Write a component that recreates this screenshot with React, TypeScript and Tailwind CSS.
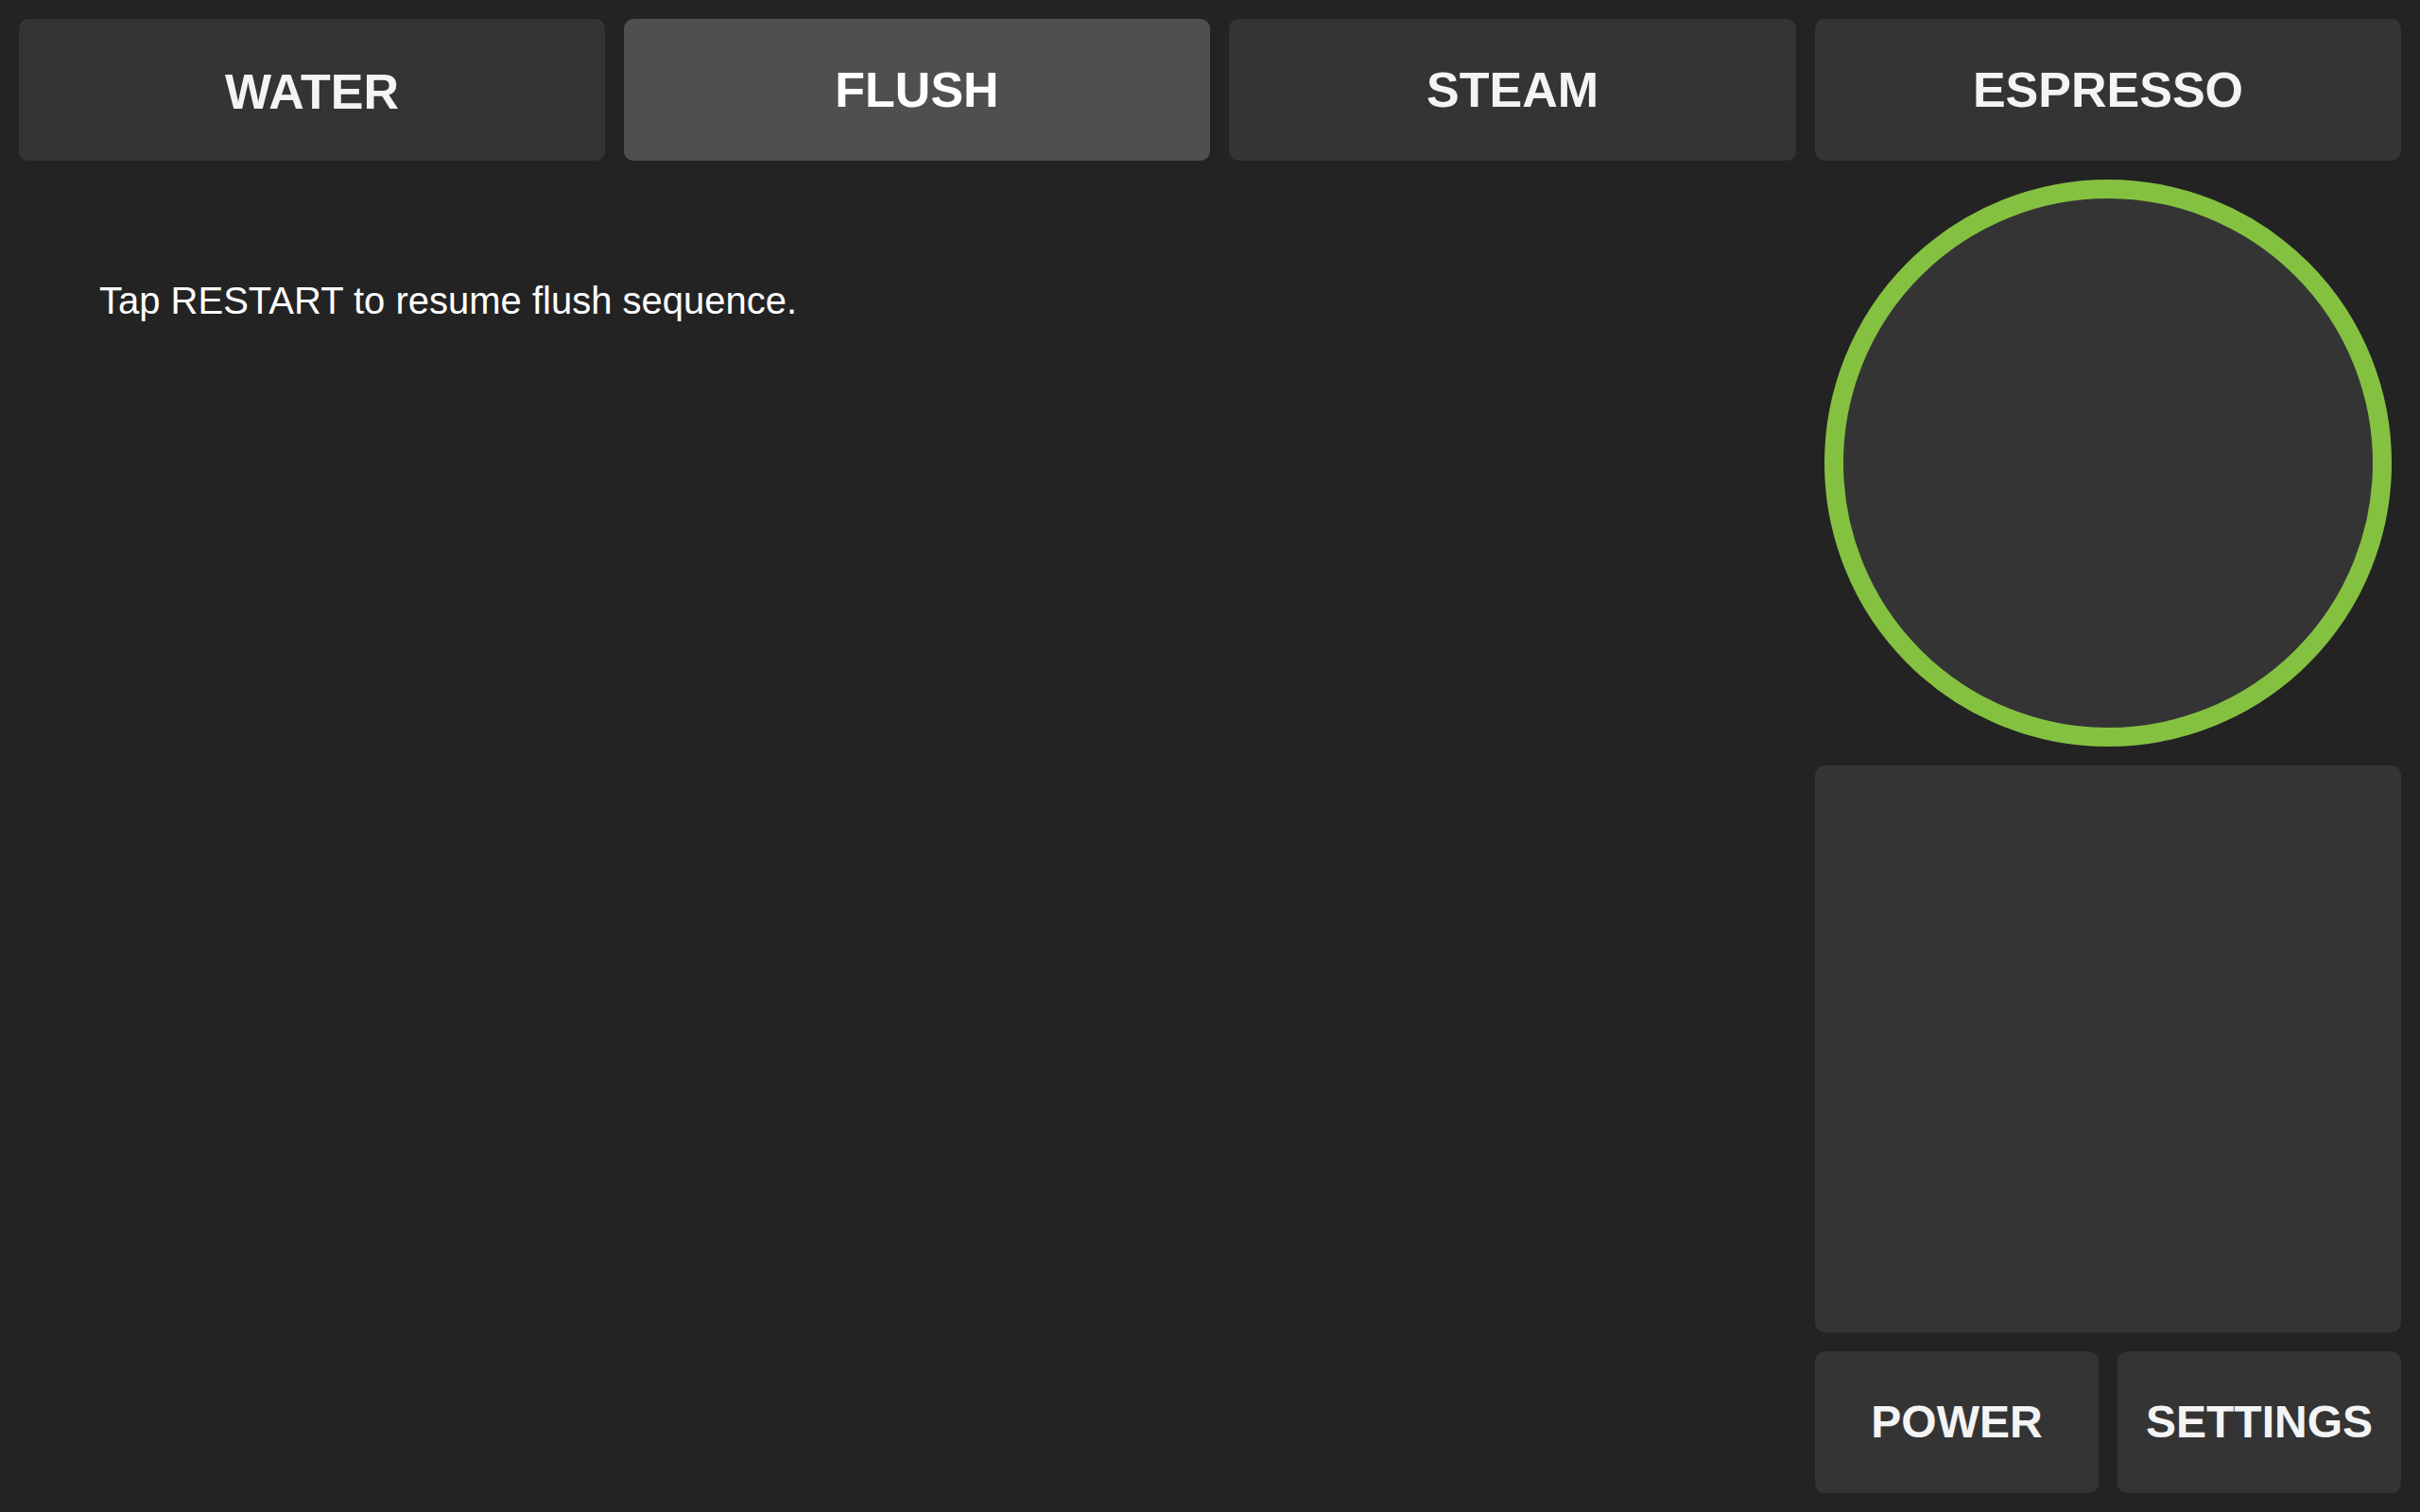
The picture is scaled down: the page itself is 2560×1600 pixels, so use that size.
const font = { fontFamily: '"Liberation Sans", Arial, sans-serif' }

function Tab({ label, active, width, extra = "" }: { label: string; active?: boolean; width: string; extra?: string }) {
  return (
    <div
      className={`${width} ${extra} h-[150px] shrink-0 rounded-[10px] flex items-center justify-center text-[52px] font-bold ${
        active ? "bg-[#4f4f4f] text-white" : "bg-[#343434] text-[#f4f4f4]"
      }`}
    >
      {label}
    </div>
  )
}

export default function App() {
  return (
    <div
      className="w-[2560px] h-[1600px] bg-[#232323] p-[20px] flex gap-[20px] overflow-hidden"
      style={font}
    >
      {/* left side: tabs + status message */}
      <div className="w-[1880px] flex flex-col">
        <div className="flex gap-[20px]">
          <Tab label="WATER" width="w-[620px]" extra="pt-[4px]" />
          <Tab label="FLUSH" width="w-[620px]" active />
          <Tab label="STEAM" width="w-[600px]" />
        </div>
        <p className="mt-[128px] pl-[85px] text-[40px] leading-none text-white">
          Tap RESTART to resume flush sequence.
        </p>
      </div>

      {/* right column */}
      <div className="w-[620px] flex flex-col gap-[20px]">
        <Tab label="ESPRESSO" width="w-[620px]" />
        <div className="flex justify-center">
          <div className="w-[600px] h-[600px] rounded-full border-[20px] border-[#85c141] bg-[#343434]" />
        </div>
        <div className="h-[600px] rounded-[10px] bg-[#343434]" />
        <div className="flex gap-[20px]">
          <div className="w-[300px] h-[150px] rounded-[10px] bg-[#343434] flex items-center justify-center text-[48px] font-bold text-[#f4f4f4]">
            POWER
          </div>
          <div className="w-[300px] h-[150px] rounded-[10px] bg-[#343434] flex items-center justify-center text-[48px] font-bold text-[#f4f4f4]">
            SETTINGS
          </div>
        </div>
      </div>
    </div>
  )
}
